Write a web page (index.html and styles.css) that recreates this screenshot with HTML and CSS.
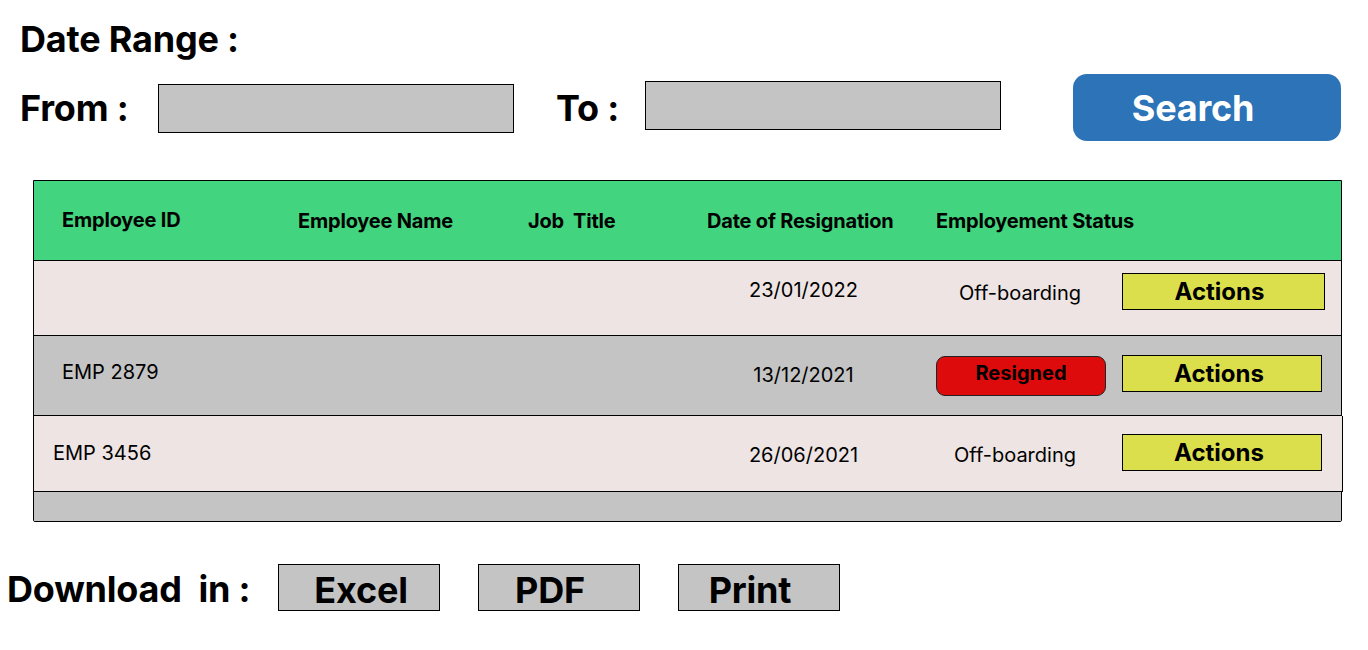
FILE: index.html
```html
<!DOCTYPE html>
<html lang="en">
<head>
<meta charset="utf-8">
<title>Resignations</title>
<link rel="stylesheet" href="styles.css">
</head>
<body>
<div class="page">
  <h1 class="title">Date Range :</h1>
  <div class="filters">
    <span class="label label-from">From :</span>
    <div class="input input-from"></div>
    <span class="label label-to">To :</span>
    <div class="input input-to"></div>
    <button class="search">Search</button>
  </div>

  <div class="table">
    <div class="row head">
      <div class="c c-id">Employee ID</div>
      <div class="c c-name">Employee Name</div>
      <div class="c c-job">Job&nbsp; Title</div>
      <div class="c c-date-h">Date of Resignation</div>
      <div class="c c-status-h">Employement Status</div>
    </div>
    <div class="row light r1">
      <div class="c c-id"></div>
      <div class="c c-name"></div>
      <div class="c c-job"></div>
      <div class="c c-date">23/01/2022</div>
      <div class="c c-status"><span class="status-text">Off-boarding</span></div>
      <div class="c c-act"><button class="actions">Actions</button></div>
    </div>
    <div class="row gray r2">
      <div class="c c-id">EMP 2879</div>
      <div class="c c-name"></div>
      <div class="c c-job"></div>
      <div class="c c-date">13/12/2021</div>
      <div class="c c-status"><span class="badge">Resigned</span></div>
      <div class="c c-act"><button class="actions">Actions</button></div>
    </div>
    <div class="row light r3">
      <div class="c c-id">EMP 3456</div>
      <div class="c c-name"></div>
      <div class="c c-job"></div>
      <div class="c c-date">26/06/2021</div>
      <div class="c c-status"><span class="status-text">Off-boarding</span></div>
      <div class="c c-act"><button class="actions">Actions</button></div>
    </div>
    <div class="row foot"></div>
  </div>

  <div class="download">
    <span class="dl-label">Download&nbsp; in :</span>
    <button class="dl-btn dl-excel">Excel</button>
    <button class="dl-btn dl-shift">PDF</button>
    <button class="dl-btn dl-shift">Print</button>
  </div>
</div>
</body>
</html>
```
FILE: styles.css
```css
* { box-sizing: border-box; }
html, body { margin: 0; padding: 0; background: #ffffff; }
body {
  font-family: Inter, "Noto Sans", sans-serif;
  color: #000;
  width: 1368px;
  height: 650px;
  overflow: hidden;
}
button { font-family: inherit; cursor: pointer; padding: 0; }

.page { padding-top: 17px; }

.title {
  margin: 0 0 0 20px;
  font-size: 36px;
  font-weight: 700;
  line-height: 44px;
  letter-spacing: -0.2px;
}

.filters {
  display: flex;
  align-items: center;
  margin-top: 13px;
  padding-left: 20px;
  height: 67px;
}
.label {
  font-size: 36px;
  font-weight: 700;
  letter-spacing: -0.2px;
  line-height: 40px;
}
.label-from { width: 138px; }
.label-to { width: 89px; margin-left: 42px; }
.input {
  height: 49px;
  background: #c4c4c4;
  border: 1px solid #000;
}
.input-from { width: 356px; margin-top: 1px; }
.input-to { width: 356px; margin-top: -5px; }
.search {
  margin-left: 72px;
  width: 268px;
  height: 67px;
  background: #2c73b7;
  border: none;
  border-radius: 14px;
  color: #fff;
  font-size: 36px;
  font-weight: 700;
  letter-spacing: -0.2px;
  padding-right: 28px;
}

.table {
  margin: 39px 0 0 33px;
  width: 1309px;
  border: 1px solid #000;
  border-radius: 0 0 2px 2px;
}
.row {
  display: flex;
  padding-left: 28px;
  border-bottom: 1px solid #000;
}
.row.head {
  height: 80px;
  background: #42d47e;
  align-items: center;
  font-size: 20px;
  font-weight: 700;
  letter-spacing: -0.2px;
}
.row.light { background: #ede4e3; }
.row.gray { background: #c4c4c4; }
.row.foot { height: 29px; background: #c4c4c4; border-bottom: none; }

.r1 { height: 75px; align-items: flex-start; padding-top: 12px; }
.r2 { height: 80px; align-items: flex-start; padding-top: 19px; }
.r3 { height: 76px; align-items: flex-start; padding-top: 18px; margin-right: -2px; padding-left: 19px; border-right: 1px solid #000; }

.c { font-size: 20px; flex: none; }
.c-id { width: 236px; }
.c-name { width: 230px; }
.c-job { width: 179px; }
.c-date-h { width: 229px; }
.c-status-h { width: 220px; }

.r3 .c-id { width: 245px; }

.row .c-date {
  width: 229px;
  text-align: center;
  padding-right: 36px;
  line-height: 37px;
}
.c-status { width: 186px; line-height: 37px; }
.c-id { line-height: 37px; }
.r2 .c-id { line-height: 35px; }
.r2 .c-date { line-height: 40px; }
.r3 .c-date { line-height: 43px; }
.r3 .c-id { line-height: 39px; }
.r1 .c-date { line-height: 34px; }

.status-text { display: inline-block; padding-left: 23px; line-height: 40px; }
.r3 .status-text { padding-left: 18px; line-height: 42px; }

.badge {
  display: inline-flex;
  align-items: center;
  justify-content: center;
  width: 170px;
  height: 40px;
  background: #dd0b0b;
  border: 1px solid #222;
  border-radius: 9px;
  font-weight: 700;
  font-size: 20px;
  padding-bottom: 4px;
}
.c-act { width: 203px; }
.actions {
  width: 203px;
  height: 37px;
  background: #dcdf4c;
  border: 1px solid #000;
  font-size: 24px;
  font-weight: 700;
  color: #000;
  padding-right: 8px;
}
.r2 .actions, .r3 .actions { width: 200px; padding-right: 6px; }

.download {
  display: flex;
  align-items: center;
  margin-top: 41px;
  padding-left: 7px;
}
.dl-label {
  width: 271px;
  font-size: 36px;
  font-weight: 700;
  letter-spacing: -0.2px;
  padding-top: 4px;
}
.dl-btn {
  width: 162px;
  height: 47px;
  margin-right: 38px;
  background: #c4c4c4;
  border: 1px solid #000;
  font-size: 36px;
  font-weight: 700;
  letter-spacing: -0.2px;
  color: #000;
  padding-top: 3px;
}
.dl-excel { padding-left: 4px; }
.dl-shift { padding-right: 18px; }
```
